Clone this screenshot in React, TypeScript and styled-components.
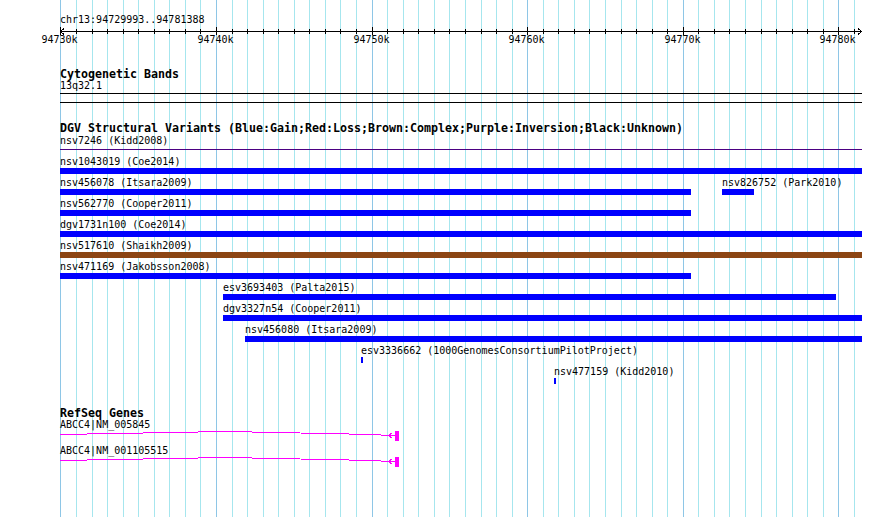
import React from 'react';
import styled, { createGlobalStyle } from 'styled-components';

const GlobalStyle = createGlobalStyle`
  html,
  body {
    margin: 0;
    padding: 0;
    background: #ffffff;
  }

  body {
    width: 890px;
    height: 517px;
    overflow: hidden;
    font-family: 'DejaVu Sans Mono', 'Liberation Mono', monospace;
    color: #000000;
  }
`;

// scale: 1kb = 15.56px, panel starts at x=60 (94730k)
const ORIGIN = 60.4;
const PX_PER_KB = 15.56;
const TRACK_WIDTH = 802;
const START_KB = 94730;
const tickX = (i: number) => Math.round(ORIGIN + i * PX_PER_KB);
const TICKS = Array.from({ length: 52 }, (_, i) => i);

type Feature = {
  name: string;
  start: number;
  end: number;
  color?: string;
  thin?: boolean;
};

const BLUE = '#0000ff';
const BROWN = '#8b4513';
const PURPLE = '#4b0082';

const variantRows: Feature[][] = [
  [{ name: 'nsv7246 (Kidd2008)', start: 0, end: 802, color: PURPLE, thin: true }],
  [{ name: 'nsv1043019 (Coe2014)', start: 0, end: 802 }],
  [
    { name: 'nsv456078 (Itsara2009)', start: 0, end: 631 },
    { name: 'nsv826752 (Park2010)', start: 662, end: 694 },
  ],
  [{ name: 'nsv562770 (Cooper2011)', start: 0, end: 631 }],
  [{ name: 'dgv1731n100 (Coe2014)', start: 0, end: 802 }],
  [{ name: 'nsv517610 (Shaikh2009)', start: 0, end: 802, color: BROWN }],
  [{ name: 'nsv471169 (Jakobsson2008)', start: 0, end: 631 }],
  [{ name: 'esv3693403 (Palta2015)', start: 163, end: 776 }],
  [{ name: 'dgv3327n54 (Cooper2011)', start: 163, end: 802 }],
  [{ name: 'nsv456080 (Itsara2009)', start: 185, end: 802 }],
  [{ name: 'esv3336662 (1000GenomesConsortiumPilotProject)', start: 301, end: 303 }],
  [{ name: 'nsv477159 (Kidd2010)', start: 494, end: 496 }],
];

const genes = ['ABCC4|NM_005845', 'ABCC4|NM_001105515'];

const Page = styled.div`
  position: relative;
  width: 890px;
  height: 517px;
  overflow: hidden;
  background: #ffffff;
`;

const GridLayer = styled.svg`
  position: absolute;
  left: 0;
  top: 0;
  z-index: 0;
  shape-rendering: crispEdges;
`;

const Panel = styled.div`
  position: relative;
  z-index: 1;
  display: flex;
  flex-direction: column;
  padding-left: 60px;
  width: ${TRACK_WIDTH}px;
`;

const SmallText = styled.div<{ $gap?: number }>`
  margin-top: ${(p) => p.$gap ?? 0}px;
  font-size: 10px;
  line-height: 10px;
  height: 10px;
  white-space: nowrap;
`;

const TrackTitle = styled.div<{ $gap: number }>`
  margin-top: ${(p) => p.$gap}px;
  font-size: 11.63px;
  font-weight: bold;
  line-height: 12px;
  height: 12px;
  white-space: nowrap;
`;

const RulerSvg = styled.svg`
  display: block;
  margin-left: -60px;
  shape-rendering: crispEdges;

  text {
    font-family: 'DejaVu Sans Mono', 'Liberation Mono', monospace;
    font-size: 10px;
  }
`;

const BandBox = styled.div`
  margin-top: 2px;
  height: 8px;
  width: ${TRACK_WIDTH}px;
  border-top: 1px solid #000000;
  border-bottom: 1px solid #000000;
`;

const FeatureRows = styled.div`
  margin-top: 2px;
  display: flex;
  flex-direction: column;
`;

const FeatureRow = styled.div`
  display: flex;
  align-items: flex-start;
  height: 21px;
`;

const FeatureItem = styled.div`
  display: flex;
  flex-direction: column;
  flex: none;
`;

const FeatureBar = styled.div<{ $color: string; $thin?: boolean }>`
  margin-top: ${(p) => (p.$thin ? 3 : 1)}px;
  height: ${(p) => (p.$thin ? 1 : 6)}px;
  background: ${(p) => p.$color};
`;

const GeneRow = styled.div`
  display: flex;
  flex-direction: column;
  height: 26px;
`;

const GeneGlyph = styled.svg`
  display: block;
  shape-rendering: crispEdges;
`;

const Grid = () => (
  <GridLayer width={890} height={517}>
    {TICKS.map((i) => (
      <line
        key={i}
        x1={tickX(i) + 0.5}
        x2={tickX(i) + 0.5}
        y1={0}
        y2={517}
        stroke={i % 10 === 0 ? '#8ec6e6' : '#a6e6ee'}
        strokeWidth={1}
      />
    ))}
  </GridLayer>
);

const Ruler = () => (
  <RulerSvg width={890} height={21}>
    <line x1={60} x2={862} y1={6.5} y2={6.5} stroke="#000" />
    <polyline points="64,3.5 60.5,6.5 64,9.5" fill="none" stroke="#000" />
    <polyline points="858,3.5 861.5,6.5 858,9.5" fill="none" stroke="#000" />
    {TICKS.map((i) => {
      const major = i % 10 === 0;
      return (
        <line
          key={i}
          x1={tickX(i) + 0.5}
          x2={tickX(i) + 0.5}
          y1={major ? 2 : 4}
          y2={major ? 10 : 9}
          stroke="#000"
        />
      );
    })}
    {TICKS.filter((i) => i % 10 === 0).map((i) => (
      <text key={i} x={tickX(i) - 0.5} y={18.3} textAnchor="middle" fill="#000">
        {`${START_KB + i}k`}
      </text>
    ))}
  </RulerSvg>
);

const VariantRow = ({ features }: { features: Feature[] }) => {
  let cursor = 0;
  return (
    <FeatureRow>
      {features.map((f) => {
        const offset = f.start - cursor;
        cursor = f.end;
        return (
          <FeatureItem key={f.name} style={{ marginLeft: offset, width: f.end - f.start }}>
            <SmallText>{f.name}</SmallText>
            <FeatureBar $color={f.color ?? BLUE} $thin={f.thin} />
          </FeatureItem>
        );
      })}
    </FeatureRow>
  );
};

const Transcript = ({ name }: { name: string }) => (
  <GeneRow>
    <SmallText>{name}</SmallText>
    <GeneGlyph width={342} height={12}>
      <polyline points="0,4.5 167,1.5 313,4.5 328,5.5" fill="none" stroke="#ff00ff" />
      <line x1={328} x2={335} y1={5.5} y2={5.5} stroke="#ff00ff" />
      <polyline points="332.5,2.5 328.5,5.5 332.5,8.5" fill="none" stroke="#ff00ff" />
      <rect x={335} y={1} width={4} height={10} fill="#ff00ff" />
    </GeneGlyph>
  </GeneRow>
);

const App = () => {
  return (
    <Page>
      <GlobalStyle />
      <Grid />
      <Panel>
        <SmallText $gap={15}>chr13:94729993..94781388</SmallText>
        <Ruler />

        <TrackTitle $gap={22}>Cytogenetic Bands</TrackTitle>
        <SmallText $gap={1}>13q32.1</SmallText>
        <BandBox />

        <TrackTitle $gap={19}>
          DGV Structural Variants (Blue:Gain;Red:Loss;Brown:Complex;Purple:Inversion;Black:Unknown)
        </TrackTitle>
        <FeatureRows>
          {variantRows.map((row, idx) => (
            <VariantRow key={idx} features={row} />
          ))}
        </FeatureRows>

        <TrackTitle $gap={19}>RefSeq Genes</TrackTitle>
        <div style={{ marginTop: 1 }}>
          {genes.map((g) => (
            <Transcript key={g} name={g} />
          ))}
        </div>
      </Panel>
    </Page>
  );
};

export default App;
